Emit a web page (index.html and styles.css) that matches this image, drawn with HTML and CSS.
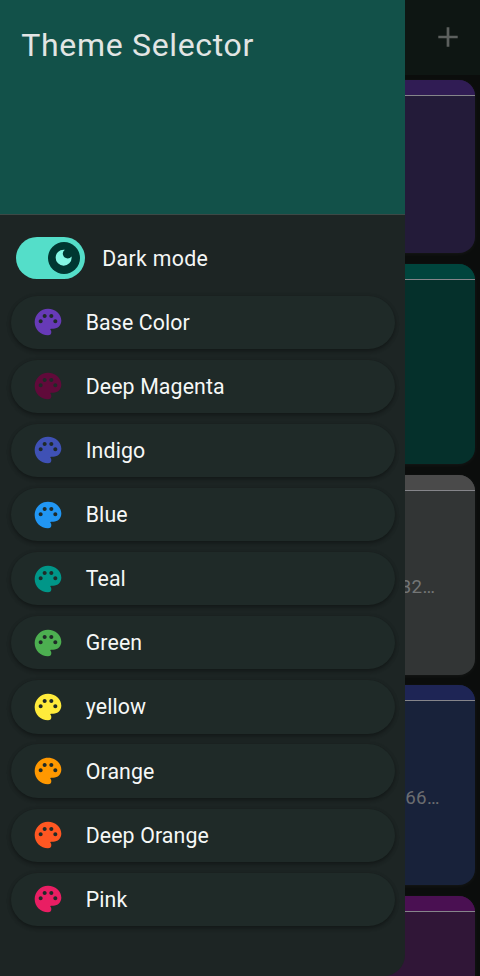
FILE: index.html
```html
<!DOCTYPE html>
<html lang="en">
<head>
<meta charset="utf-8">
<title>Theme Selector</title>
<link rel="stylesheet" href="styles.css">
</head>
<body>
<svg width="0" height="0" class="defs">
  <symbol id="palette" viewBox="0 0 24 24">
    <path fill="currentColor" fill-rule="evenodd" d="M12 2C6.49 2 2 6.49 2 12s4.49 10 10 10a2.5 2.5 0 0 0 2.5-2.5c0-.61-.23-1.2-.64-1.67a.53.53 0 0 1-.13-.33c0-.28.22-.5.5-.5H16c3.31 0 6-2.69 6-6 0-4.96-4.49-9-10-9zm5.5 11c-.83 0-1.5-.67-1.5-1.5s.67-1.5 1.5-1.5 1.5.67 1.5 1.5-.67 1.5-1.5 1.5zm-3-4c-.83 0-1.5-.67-1.5-1.5S13.67 6 14.5 6s1.5.67 1.5 1.5S15.33 9 14.5 9zM5 11.5c0-.83.67-1.5 1.5-1.5s1.5.67 1.5 1.5S7.33 13 6.5 13 5 12.33 5 11.5zm6-4c0 .83-.67 1.5-1.5 1.5S8 8.33 8 7.5 8.67 6 9.5 6s1.5.67 1.5 1.5z"/>
  </symbol>
</svg>
<div class="screen">
  <main class="page">
    <header class="appbar">
      <svg class="plus" viewBox="0 0 20 20"><path d="M10 0.300v19.400M.3 10h19.400" stroke="currentColor" stroke-width="2.700"/></svg>
    </header>
    <div class="notes">
      <article class="note short violet"><div class="cap"></div><div class="body"></div></article>
      <article class="note teal"><div class="cap"></div><div class="body"></div></article>
      <article class="note gray"><div class="cap"></div><div class="body"><span class="n1">32…</span></div></article>
      <article class="note navy"><div class="cap"></div><div class="body"><span class="n2">66…</span></div></article>
      <article class="note plum"><div class="cap"></div><div class="body"></div></article>
    </div>
  </main>
  <aside class="drawer">
    <header class="head"><h1>Theme Selector</h1></header>
    <div class="mode">
      <div class="switch"><div class="thumb"><svg viewBox="0 0 24 24"><path fill="currentColor" d="M12 3a9 9 0 1 0 9 9c0-.46-.04-.92-.1-1.36a5.39 5.39 0 0 1-4.4 2.26 5.4 5.4 0 0 1-3.14-9.8c-.44-.06-.9-.1-1.36-.1z"/></svg></div></div>
      <span>Dark mode</span>
    </div>
    <nav class="colors">
      <button class="item c-base"><svg><use href="#palette"/></svg><span>Base Color</span></button>
      <button class="item c-magenta"><svg><use href="#palette"/></svg><span>Deep Magenta</span></button>
      <button class="item c-indigo"><svg><use href="#palette"/></svg><span>Indigo</span></button>
      <button class="item c-blue"><svg><use href="#palette"/></svg><span>Blue</span></button>
      <button class="item c-teal"><svg><use href="#palette"/></svg><span>Teal</span></button>
      <button class="item c-green"><svg><use href="#palette"/></svg><span>Green</span></button>
      <button class="item c-yellow"><svg><use href="#palette"/></svg><span>yellow</span></button>
      <button class="item c-orange"><svg><use href="#palette"/></svg><span>Orange</span></button>
      <button class="item c-deep"><svg><use href="#palette"/></svg><span>Deep Orange</span></button>
      <button class="item c-pink"><svg><use href="#palette"/></svg><span>Pink</span></button>
    </nav>
  </aside>
</div>
</body>
</html>
```
FILE: styles.css
```css
* { box-sizing: border-box; }
body { margin: 0; background: #0b0d0c; font-family: Roboto, sans-serif; }
.defs { position: absolute; }
.screen { position: relative; width: 480px; height: 976px; overflow: hidden; background: #0b0d0c; }

.appbar { height: 75px; background: #0e1613; display: flex; justify-content: flex-end; padding: 27.300px 22px 0 0; }
.plus { width: 20px; height: 20px; color: #5c605e; }
.notes { display: flex; flex-direction: column; gap: 10.700px; padding: 5px 5.300px 0; }
.note { height: 200px; flex: none; border-radius: 16px; overflow: hidden; display: flex; flex-direction: column; box-shadow: 0 1px 4px #ffffff0c; }
.note.short { height: 173.300px; }
.cap { height: 16px; border-bottom: 1.300px solid #85858a; }
.body { flex: 1; display: flex; justify-content: flex-end; padding-top: 85px; font-size: 18.700px; line-height: 22px; letter-spacing: .3px; color: #747676; }
.n1 { padding-right: 39.500px; }
.n2 { padding-right: 35px; padding-top: .5px; color: #6b6d70; }
.violet { background: #231b39; } .violet .cap { background: #301c54; }
.teal { background: #05302b; } .teal .cap { background: #00453d; }
.gray { background: #323535; } .gray .cap { background: #4a4a4a; }
.navy { background: #18223a; } .navy .cap { background: #1e2555; }
.plum { background: #301637; } .plum .cap { background: #4a1052; }

.drawer { position: absolute; left: 0; top: 0; width: 405.300px; height: 976px; background: #1d2524; border-radius: 0 0 21px 0; overflow: hidden; }
.head { height: 215px; background: #125149; border-bottom: 1.300px solid #3c4946; padding: 25.500px 21.300px; }
h1 { margin: 0; font-size: 32px; line-height: 38px; font-weight: 400; letter-spacing: .67px; color: #e2e5e4; }
.mode { display: flex; align-items: center; gap: 17px; height: 43px; margin: 21.500px 0 0 16px; color: #f4f6f5; font-size: 21.300px; letter-spacing: .33px; }
.switch { width: 69.300px; height: 42.700px; border-radius: 22px; background: #54dec9; display: flex; align-items: center; justify-content: flex-end; padding-right: 5.300px; }
.thumb { width: 32px; height: 32px; border-radius: 50%; background: #003731; color: #84f7e4; display: flex; align-items: center; justify-content: center; }
.thumb svg { width: 21.300px; height: 21.300px; }
.colors { display: flex; flex-direction: column; gap: 10.800px; padding: 16px 10.700px 0; }
.item { height: 53.330px; border: 0; border-radius: 27px; background: #1f2a28; box-shadow: 0 2px 4px #0000004d, 0 1px 5px #00000020; display: flex; align-items: center; gap: 21.700px; padding: 0 21.300px; color: inherit; font: 400 21.300px/26px Roboto, sans-serif; letter-spacing: .13px; }
.item svg { width: 32px; height: 32px; }
.item span { color: #f6f8f7; padding-top: 1px; }
.c-base { color: #673ab7; }
.c-magenta { color: #600a3a; }
.c-indigo { color: #3f51b5; }
.c-blue { color: #2196f3; }
.c-teal { color: #009688; }
.c-green { color: #4caf50; }
.c-yellow { color: #ffeb3b; }
.c-orange { color: #ff9800; }
.c-deep { color: #ff5722; }
.c-pink { color: #e91e63; }
```
